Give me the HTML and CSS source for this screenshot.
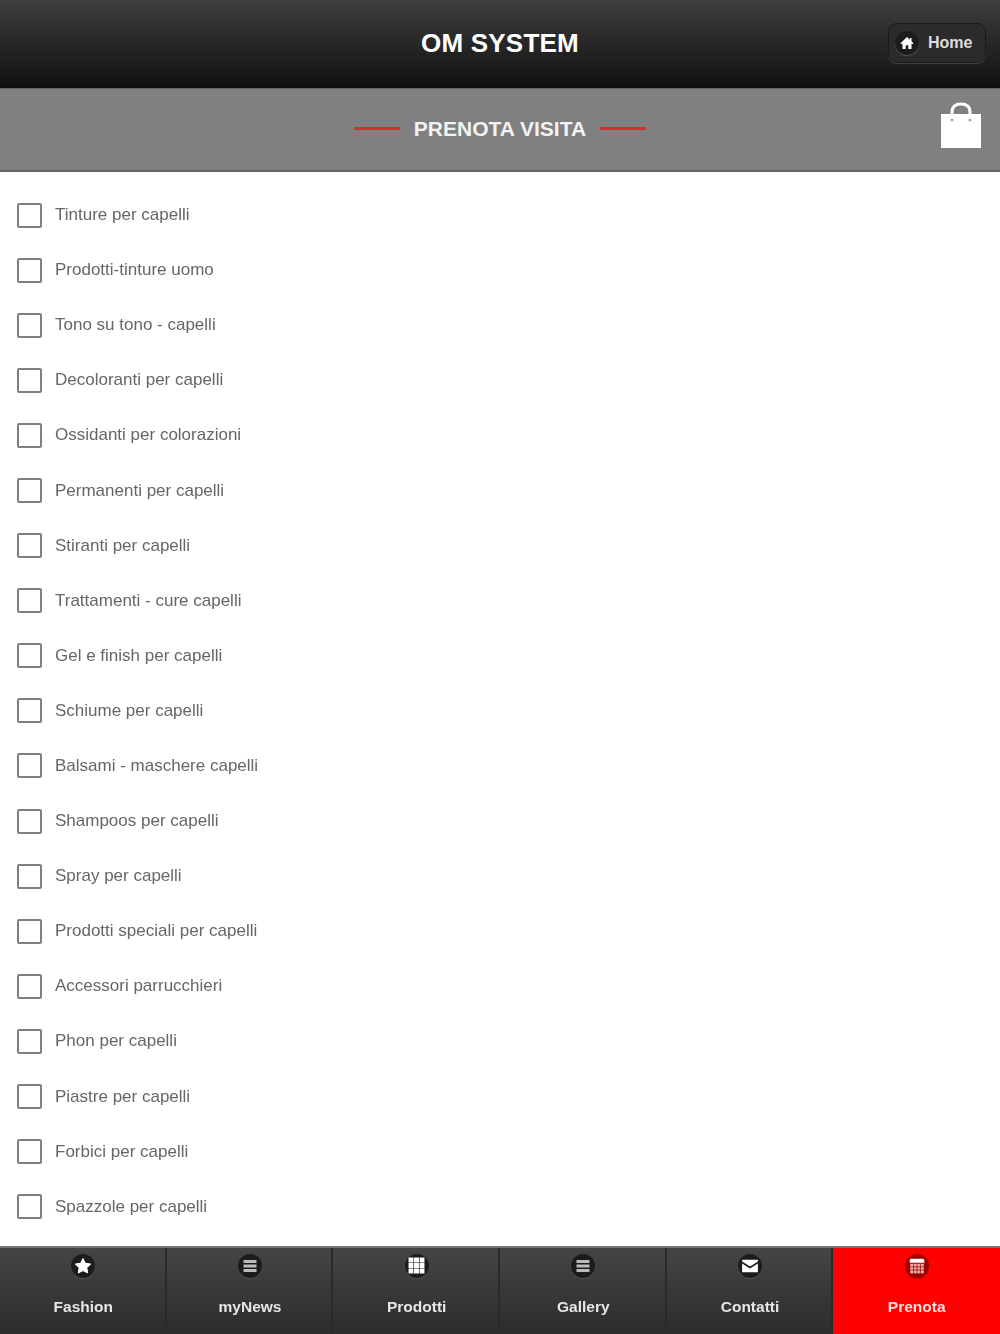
FILE: index.html
```html
<!DOCTYPE html>
<html>
<head>
	<meta charset="utf-8">
	<title>OM System - Prenota visita</title>
	<link rel="stylesheet" href="styles.css">
</head>
<body>
	<section class="pagina">
		<header class="testata">
			<h1>OM SYSTEM</h1>
			<a class="btn-home" href="#">
				<span class="ico-tondo">
					<svg viewBox="0 0 16 16" width="16" height="16"><path d="M8 2 1.500 8.200 2.600 9.300 3.500 8.500V14H6.700V10.200H9.300V14H12.500V8.500L13.400 9.300 14.500 8.200 12.500 6.300V3H10.800V4.700Z" fill="#fff"/></svg>
				</span>
				Home
			</a>
		</header>
		<section class="sottotitolo">
			<div class="titolo-pagina">
				<span class="trattino"></span>
				<h2>PRENOTA VISITA</h2>
				<span class="trattino"></span>
			</div>
			<svg class="borsa" viewBox="0 0 42 46" width="42" height="46">
				<path d="M1 12H41V46H1Z" fill="#fff"/>
				<path d="M12 16V10C12 4.500 15.500 2 21 2S30 4.500 30 10V16" fill="none" stroke="#fff" stroke-width="3"/>
				<circle cx="12" cy="18" r="1.500" fill="#aaa"/>
				<circle cx="30" cy="18" r="1.500" fill="#aaa"/>
			</svg>
		</section>
		<form class="elenco">
			<label class="voce"><input type="checkbox"><span>Tinture per capelli</span></label>
			<label class="voce"><input type="checkbox"><span>Prodotti-tinture uomo</span></label>
			<label class="voce"><input type="checkbox"><span>Tono su tono - capelli</span></label>
			<label class="voce"><input type="checkbox"><span>Decoloranti per capelli</span></label>
			<label class="voce"><input type="checkbox"><span>Ossidanti per colorazioni</span></label>
			<label class="voce"><input type="checkbox"><span>Permanenti per capelli</span></label>
			<label class="voce"><input type="checkbox"><span>Stiranti per capelli</span></label>
			<label class="voce"><input type="checkbox"><span>Trattamenti - cure capelli</span></label>
			<label class="voce"><input type="checkbox"><span>Gel e finish per capelli</span></label>
			<label class="voce"><input type="checkbox"><span>Schiume per capelli</span></label>
			<label class="voce"><input type="checkbox"><span>Balsami - maschere capelli</span></label>
			<label class="voce"><input type="checkbox"><span>Shampoos per capelli</span></label>
			<label class="voce"><input type="checkbox"><span>Spray per capelli</span></label>
			<label class="voce"><input type="checkbox"><span>Prodotti speciali per capelli</span></label>
			<label class="voce"><input type="checkbox"><span>Accessori parrucchieri</span></label>
			<label class="voce"><input type="checkbox"><span>Phon per capelli</span></label>
			<label class="voce"><input type="checkbox"><span>Piastre per capelli</span></label>
			<label class="voce"><input type="checkbox"><span>Forbici per capelli</span></label>
			<label class="voce"><input type="checkbox"><span>Spazzole per capelli</span></label>
		</form>
		<nav class="menu">
			<a href="#">
				<span class="ico-tondo">
					<svg viewBox="0 0 16 16" width="18" height="18"><path d="M8 1.500 10 5.600 14.600 6.300 11.300 9.500 12.100 14 8 11.900 3.900 14 4.700 9.500 1.400 6.300 6 5.600Z" fill="#fff" stroke="#fff" stroke-linejoin="round"/></svg>
				</span>
				Fashion
			</a>
			<a href="#">
				<span class="ico-tondo">
					<svg viewBox="0 0 14 14" width="14" height="14"><path d="M.5 1H13.500V4H.5ZM.5 5.500H13.500V8.500H.5ZM.5 10H13.500V13H.5Z" fill="#bbb"/></svg>
				</span>
				myNews
			</a>
			<a href="#">
				<span class="ico-tondo">
					<svg class="griglia" viewBox="0 0 16 16" width="17" height="17"><path d="M.5.5H5.100V5.100H.5ZM5.700.5H10.300V5.100H5.700ZM10.900.5H15.500V5.100H10.900ZM.5 5.700H5.100V10.300H.5ZM5.700 5.700H10.300V10.300H5.700ZM10.900 5.700H15.500V10.300H10.900ZM.5 10.900H5.100V15.500H.5ZM5.700 10.900H10.300V15.500H5.700ZM10.900 10.900H15.500V15.500H10.900Z" fill="#fff"/></svg>
				</span>
				Prodotti
			</a>
			<a href="#">
				<span class="ico-tondo">
					<svg viewBox="0 0 14 14" width="14" height="14"><path d="M.5 1H13.500V4H.5ZM.5 5.500H13.500V8.500H.5ZM.5 10H13.500V13H.5Z" fill="#bbb"/></svg>
				</span>
				Gallery
			</a>
			<a href="#">
				<span class="ico-tondo">
					<svg viewBox="0 0 16 16" width="18" height="18"><path d="M1 2.500H15V4L8 8.500 1 4ZM1 5.800 8 10.300 15 5.800V13.500H1Z" fill="#fff"/></svg>
				</span>
				Contatti
			</a>
			<a class="attiva" href="#">
				<span class="ico-tondo">
					<svg viewBox="0 0 16 16" width="18" height="18"><path d="M1.500 3C1.500 2.200 2 1.500 3 1.500H13C14 1.500 14.500 2.200 14.500 3V5H1.500Z" fill="#fff"/><path d="M2 6H14V14.500H2Z" fill="#f3b5b5"/><path d="M5 6V14.500M8 6V14.500M11 6V14.500M2 8.800H14M2 11.600H14" stroke="#a00000" stroke-width=".7"/></svg>
				</span>
				Prenota
			</a>
		</nav>
	</section>
</body>
</html>
```

FILE: styles.css
```css
html, body {
	margin: 0;
	padding: 0;
}
body {
	font-family: "Liberation Sans", Arial, sans-serif;
	background-color: white;
}
/* il riferimento e' un'immagine ingrandita, quindi tutto un po' sfocato */
.pagina {
	display: flex;
	flex-direction: column;
	height: 1334px;
	overflow: hidden;
	filter: blur(0.5px);
}
.testata {
	display: flex;
	align-items: center;
	justify-content: center;
	position: relative;
	flex: none;
	box-sizing: border-box;
	height: 88px;
	padding-bottom: 1px;
	background: linear-gradient(#3e3e3e, #101010);
}
.testata h1 {
	margin: 0;
	color: white;
	font-size: 26px;
	font-weight: bold;
	letter-spacing: 0.2px;
}
.btn-home {
	display: flex;
	align-items: center;
	gap: 9px;
	position: absolute;
	top: 23px;
	right: 14px;
	box-sizing: border-box;
	width: 98px;
	height: 40px;
	padding-left: 6px;
	border: 1px solid #1a1a1a;
	border-radius: 9px;
	background-color: #2b2b2b;
	box-shadow: 0 1px 1px #444;
	color: #ddd;
	font-size: 16px;
	font-weight: bold;
	text-decoration: none;
}
.sottotitolo {
	display: flex;
	align-items: center;
	justify-content: center;
	position: relative;
	flex: none;
	height: 81px;
	border-top: 1px solid #666;
	border-bottom: 2px solid #666;
	background-color: #808080;
}
.titolo-pagina {
	display: flex;
	align-items: center;
	gap: 14px;
	padding-bottom: 2px;
}
.titolo-pagina h2 {
	margin: 0;
	color: #f2f2f2;
	font-size: 21px;
	font-weight: bold;
}
.trattino {
	width: 46px;
	height: 3px;
	background-color: #d43030;
}
.borsa {
	position: absolute;
	top: 13px;
	right: 18px;
}
.elenco {
	display: flex;
	flex-direction: column;
	flex: 1;
	padding-top: 15.5px;
}
.voce {
	display: flex;
	align-items: center;
	flex: none;
	height: 55.1px;
	padding-left: 17px;
	color: #666;
	font-size: 17px;
}
.voce input {
	appearance: none;
	box-sizing: border-box;
	width: 25px;
	height: 25px;
	margin: 0 13px 0 0;
	border: 2px solid #808080;
	border-radius: 2px;
	background-color: white;
}
.menu {
	display: grid;
	grid-template-columns: repeat(6, 1fr);
	flex: none;
	box-sizing: border-box;
	height: 88px;
	border-top: 2px solid #777;
}
.menu a {
	display: flex;
	flex-direction: column;
	align-items: center;
	padding-top: 6px;
	background: linear-gradient(#454545, #2c2c2c);
	box-shadow: inset -2px 0 #2a2a2a;
	color: #e6e6e6;
	font-size: 15.5px;
	font-weight: bold;
	text-decoration: none;
}
.menu .attiva {
	background: #f00;
	box-shadow: none;
	color: #fdd;
}
.menu .ico-tondo {
	margin-bottom: 20px;
}
.ico-tondo {
	display: flex;
	flex: none;
	align-items: center;
	justify-content: center;
	width: 24px;
	height: 24px;
	border-radius: 50%;
	background-color: #1c1c1c;
	box-shadow: 0 1px 1px #555;
}
.griglia {
	margin-top: -2px;
}
.attiva .ico-tondo {
	background-color: #9c0000;
	box-shadow: 0 1px 1px #c00;
}
```
